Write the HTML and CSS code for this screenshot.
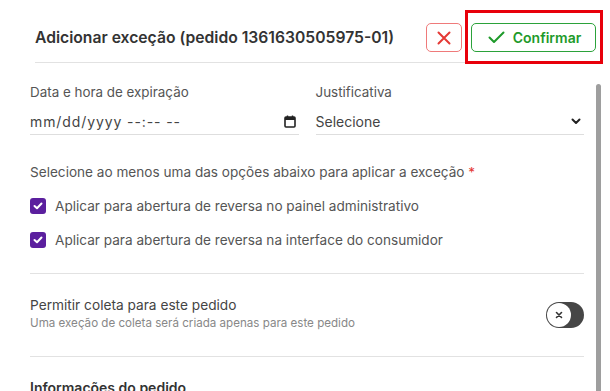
FILE: index.html
```html
<!DOCTYPE html>
<html lang="pt-BR">
  <head>
    <meta charset="utf-8" />
    <meta name="viewport" content="width=device-width, initial-scale=1" />
    <title>Adicionar exceção</title>
    <link rel="stylesheet" href="styles.css">
  </head>
  <body>
    <div class="modal">
      <!-- header with title and actions -->
      <div class="header">
        <h1 class="title">Adicionar exceção (pedido 1361630505975-01)</h1>
        <div class="actions">
          <button class="btn-cancel" aria-label="Cancelar">
            <svg width="14" height="14" viewBox="0 0 14 14"><path d="M1.5 1.5 L12.5 12.5 M12.5 1.5 L1.5 12.5" stroke="#e53935" stroke-width="2" stroke-linecap="round" fill="none"/></svg>
          </button>
          <button class="btn-confirm">
            <svg width="17" height="13" viewBox="0 0 17 13"><path d="M1.5 6.5 L6 11 L15.5 1.5" stroke="#1e9a2a" stroke-width="2" stroke-linecap="round" stroke-linejoin="round" fill="none"/></svg>
            Confirmar
          </button>
        </div>
      </div>

      <div class="content">
        <div class="fields">
          <div class="field">
            <div class="label">Data e hora de expiração</div>
            <div class="input">
              <span class="date-text">mm/dd/yyyy --:-- --</span>
              <svg width="12" height="13" viewBox="0 0 12 13"><rect x="1" y="2" width="10" height="10" rx="1" stroke="#222" stroke-width="1.6" fill="none"/><rect x="1" y="2" width="10" height="3" fill="#222"/><path d="M3.5 0.5 V2.5 M8.5 0.5 V2.5" stroke="#222" stroke-width="1.4"/></svg>
            </div>
          </div>
          <div class="field">
            <div class="label">Justificativa</div>
            <div class="input">
              <span>Selecione</span>
              <svg width="10" height="7" viewBox="0 0 10 7"><path d="M1.5 1.5 L5 5 L8.5 1.5" stroke="#222" stroke-width="2" fill="none" stroke-linecap="round" stroke-linejoin="round"/></svg>
            </div>
          </div>
        </div>

        <p class="question">Selecione ao menos uma das opções abaixo para aplicar a exceção <span class="required">*</span></p>

        <label class="check-row">
          <span class="checkbox"><svg width="10" height="8" viewBox="0 0 10 8"><path d="M1.5 4 L4 6.3 L8.5 1.5" stroke="#fff" stroke-width="2" fill="none" stroke-linecap="round" stroke-linejoin="round"/></svg></span>
          Aplicar para abertura de reversa no painel administrativo
        </label>
        <label class="check-row">
          <span class="checkbox"><svg width="10" height="8" viewBox="0 0 10 8"><path d="M1.5 4 L4 6.3 L8.5 1.5" stroke="#fff" stroke-width="2" fill="none" stroke-linecap="round" stroke-linejoin="round"/></svg></span>
          Aplicar para abertura de reversa na interface do consumidor
        </label>

        <div class="collect">
          <div>
            <div class="collect-title">Permitir coleta para este pedido</div>
            <div class="collect-sub">Uma exeção de coleta será criada apenas para este pedido</div>
          </div>
          <div class="toggle">
            <span class="knob"><svg width="8" height="8" viewBox="0 0 8 8"><path d="M1.5 1.5 L6.5 6.5 M6.5 1.5 L1.5 6.5" stroke="#333" stroke-width="1.6" stroke-linecap="round"/></svg></span>
          </div>
        </div>

        <h2 class="section-title">Informações do pedido</h2>
      </div>

      <!-- highlight box around the confirm button -->
      <div class="highlight"></div>
      <div class="scrollbar"></div>
    </div>
  </body>
</html>
```

FILE: styles.css
```css
* {
  box-sizing: border-box;
}

body {
  margin: 0;
  font-family: Inter, "Noto Sans", sans-serif;
  background-color: white;
  color: #555;
  overflow: hidden;
}

.modal {
  position: relative;
  height: 391px;
  overflow: hidden;
}

.header {
  display: flex;
  align-items: center;
  justify-content: space-between;
  margin: 0 14px 0 35px;
  padding: 23px 0 10px;
  border-bottom: 1px solid #e2e2e2;
}

.title {
  margin: 0;
  font-size: 15.7px;
  font-weight: 600;
  color: #333;
  line-height: 29px;
}

.actions {
  display: flex;
  gap: 9px;
}

button {
  font-family: inherit;
  background: white;
  cursor: pointer;
  height: 29px;
  border-radius: 5px;
  display: flex;
  align-items: center;
  justify-content: center;
}

.btn-cancel {
  width: 36px;
  border: 1px solid #ef7a7a;
  padding: 0;
}

.btn-confirm {
  width: 125px;
  border: 1px solid #2ba23a;
  color: #1e9a2a;
  font-size: 14px;
  font-weight: 600;
  gap: 8px;
  padding: 0 0 0 2px;
}

.content {
  padding: 21px 26px 0 30px;
}

.fields {
  display: grid;
  grid-template-columns: 1fr 1fr;
  gap: 17px;
}

.label {
  font-size: 13.4px;
  line-height: 16px;
}

.input {
  display: flex;
  align-items: center;
  justify-content: space-between;
  margin-top: 8px;
  height: 27px;
  padding-right: 3px;
  border-bottom: 1px solid #dedede;
  font-size: 14px;
  color: #444;
}

.date-text {
  letter-spacing: 0.9px;
}

.question {
  margin: 29px 0 18px;
  font-size: 13.6px;
  line-height: 16px;
}

.required {
  color: #e53935;
}

.check-row {
  display: flex;
  align-items: center;
  gap: 9px;
  font-size: 13.6px;
  line-height: 16px;
  margin-bottom: 18px;
}

.checkbox {
  width: 16px;
  height: 16px;
  border-radius: 3px;
  background-color: #5b1f9e;
  display: flex;
  align-items: center;
  justify-content: center;
}

.collect {
  display: flex;
  align-items: center;
  justify-content: space-between;
  margin-top: 25px;
  padding: 22px 0 26px;
  border-top: 1px solid #e2e2e2;
  border-bottom: 1px solid #e2e2e2;
}

.collect-title {
  font-size: 13.7px;
  line-height: 18px;
  color: #444;
}

.collect-sub {
  margin-top: 2px;
  font-size: 11.6px;
  line-height: 14px;
  color: #888;
}

.toggle {
  width: 38px;
  height: 26px;
  margin-top: 4px;
  border-radius: 13px;
  background-color: #464646;
  padding: 1px;
}

.knob {
  width: 24px;
  height: 24px;
  border-radius: 50%;
  background: white;
  display: flex;
  align-items: center;
  justify-content: center;
}

.section-title {
  margin: 22px 0 0;
  font-size: 14px;
  font-weight: 600;
  color: #333;
  line-height: 18px;
}

.highlight {
  position: absolute;
  left: 465px;
  top: 10px;
  width: 138px;
  height: 54px;
  border: 3px solid #e8000b;
}

.scrollbar {
  position: absolute;
  left: 596px;
  top: 84px;
  width: 5px;
  height: 320px;
  border-radius: 3px;
  background-color: #9e9e9e;
}
```
